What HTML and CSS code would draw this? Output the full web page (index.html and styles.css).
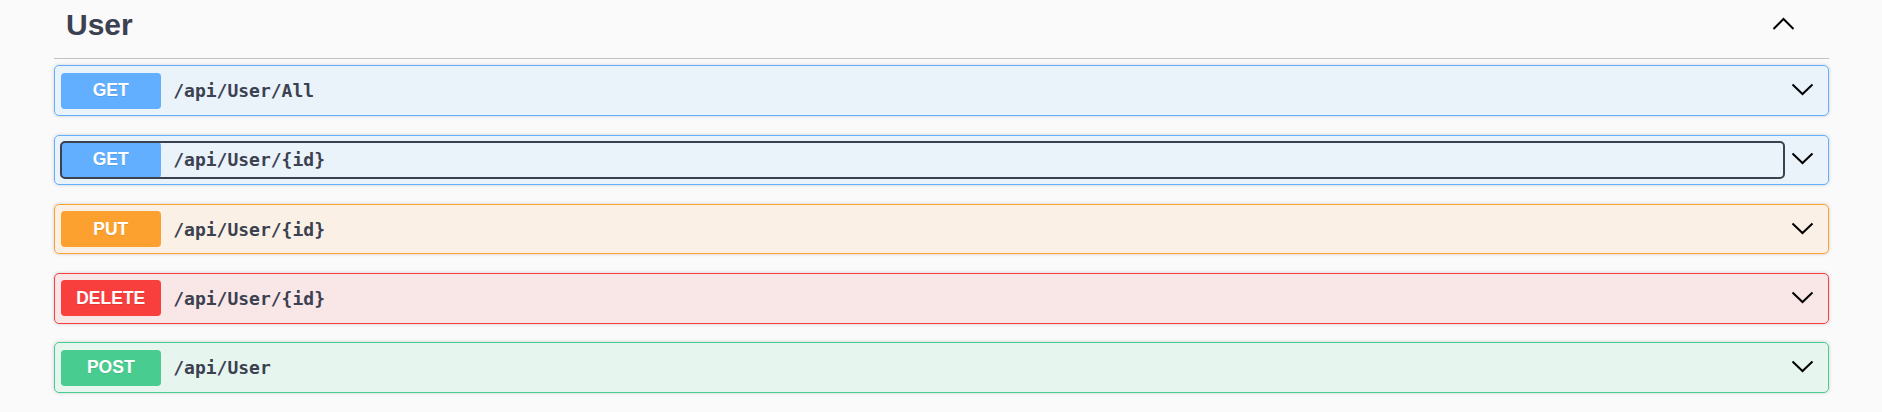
FILE: index.html
```html
<!DOCTYPE html>
<html lang="en">
<head>
<meta charset="utf-8">
<title>User</title>
<link rel="stylesheet" href="styles.css">
</head>
<body>
<div class="wrapper">
  <section class="tag-section">
    <h3 class="opblock-tag">
      <span class="tag-name">User</span>
      <button class="expand-operation" aria-label="Collapse">
        <svg width="25" height="25" viewBox="0 0 25 25"><polyline points="2.5,16 12.5,6 22.5,16" fill="none" stroke="#000" stroke-width="2"/></svg>
      </button>
    </h3>

    <div class="opblock opblock-get">
      <div class="summary">
        <button class="summary-control"><span class="method">GET</span><span class="path">/api/User/All</span></button>
        <button class="arrow" aria-label="Expand"><svg width="25" height="25" viewBox="0 0 25 25"><polyline points="2.5,6.5 12.5,16 22.5,6.5" fill="none" stroke="#000" stroke-width="2"/></svg></button>
      </div>
    </div>

    <div class="opblock opblock-get">
      <div class="summary">
        <button class="summary-control focused"><span class="method">GET</span><span class="path">/api/User/{id}</span></button>
        <button class="arrow" aria-label="Expand"><svg width="25" height="25" viewBox="0 0 25 25"><polyline points="2.5,6.5 12.5,16 22.5,6.5" fill="none" stroke="#000" stroke-width="2"/></svg></button>
      </div>
    </div>

    <div class="opblock opblock-put">
      <div class="summary">
        <button class="summary-control"><span class="method">PUT</span><span class="path">/api/User/{id}</span></button>
        <button class="arrow" aria-label="Expand"><svg width="25" height="25" viewBox="0 0 25 25"><polyline points="2.5,6.5 12.5,16 22.5,6.5" fill="none" stroke="#000" stroke-width="2"/></svg></button>
      </div>
    </div>

    <div class="opblock opblock-delete">
      <div class="summary">
        <button class="summary-control"><span class="method">DELETE</span><span class="path">/api/User/{id}</span></button>
        <button class="arrow" aria-label="Expand"><svg width="25" height="25" viewBox="0 0 25 25"><polyline points="2.5,6.5 12.5,16 22.5,6.5" fill="none" stroke="#000" stroke-width="2"/></svg></button>
      </div>
    </div>

    <div class="opblock opblock-post">
      <div class="summary">
        <button class="summary-control"><span class="method">POST</span><span class="path">/api/User</span></button>
        <button class="arrow" aria-label="Expand"><svg width="25" height="25" viewBox="0 0 25 25"><polyline points="2.5,6.5 12.5,16 22.5,6.5" fill="none" stroke="#000" stroke-width="2"/></svg></button>
      </div>
    </div>
  </section>
</div>
</body>
</html>
```

FILE: styles.css
```css
html, body {
  margin: 0;
  padding: 0;
  background: #fafafa;
}

.wrapper {
  max-width: 1825px;
  margin: 0 auto;
  padding: 0 25px;
  box-sizing: border-box;
}

.opblock-tag {
  display: flex;
  align-items: center;
  margin: 0 0 6.25px;
  padding: 8px 25px 15.5px 12.5px;
  border-bottom: 1px solid rgba(59, 65, 81, 0.3);
  font-family: "Liberation Sans", Arial, sans-serif;
  font-size: 30px;
  font-weight: 700;
  line-height: 34.5px;
  color: #3b4151;
}

.tag-name {
  flex: 1;
}

.expand-operation {
  border: none;
  background: none;
  padding: 0 7.5px;
  margin: 0;
  display: flex;
  align-items: center;
  cursor: pointer;
}

.expand-operation svg,
.arrow svg {
  display: block;
}

.opblock {
  border: 1px solid;
  border-radius: 5px;
  box-shadow: 0 0 3.75px rgba(0, 0, 0, 0.19);
  margin: 0 0 18.75px;
}

.summary {
  display: flex;
  align-items: center;
  padding: 6.25px;
}

.summary-control {
  flex: 1;
  display: flex;
  align-items: center;
  border: none;
  background: none;
  padding: 0;
  margin: 0;
  border-radius: 4px;
  text-align: left;
  cursor: pointer;
}

.summary-control.focused {
  outline: 2px solid #3b4151;
  outline-offset: -1px;
}

.method {
  min-width: 100px;
  padding: 7.5px 0;
  border-radius: 3.75px;
  font-family: "Liberation Sans", Arial, sans-serif;
  font-size: 17.5px;
  font-weight: 700;
  line-height: 21px;
  color: #fff;
  text-align: center;
  text-shadow: 0 1.25px 0 rgba(0, 0, 0, 0.1);
}

.path {
  padding: 0 12.5px;
  font-family: "DejaVu Sans Mono", "Liberation Mono", monospace;
  font-size: 18px;
  font-weight: 700;
  color: #3b4151;
}

.arrow {
  border: none;
  background: none;
  padding: 0 6.125px;
  margin: 0;
  display: flex;
  align-items: center;
  cursor: pointer;
}

.opblock-get {
  background: rgba(97, 175, 254, 0.1);
  border-color: #61affe;
}
.opblock-get .method { background: #61affe; }

.opblock-put {
  background: rgba(252, 161, 48, 0.1);
  border-color: #fca130;
}
.opblock-put .method { background: #fca130; }

.opblock-delete {
  background: rgba(249, 62, 62, 0.1);
  border-color: #f93e3e;
}
.opblock-delete .method { background: #f93e3e; }

.opblock-post {
  background: rgba(73, 204, 144, 0.1);
  border-color: #49cc90;
}
.opblock-post .method { background: #49cc90; }
```
